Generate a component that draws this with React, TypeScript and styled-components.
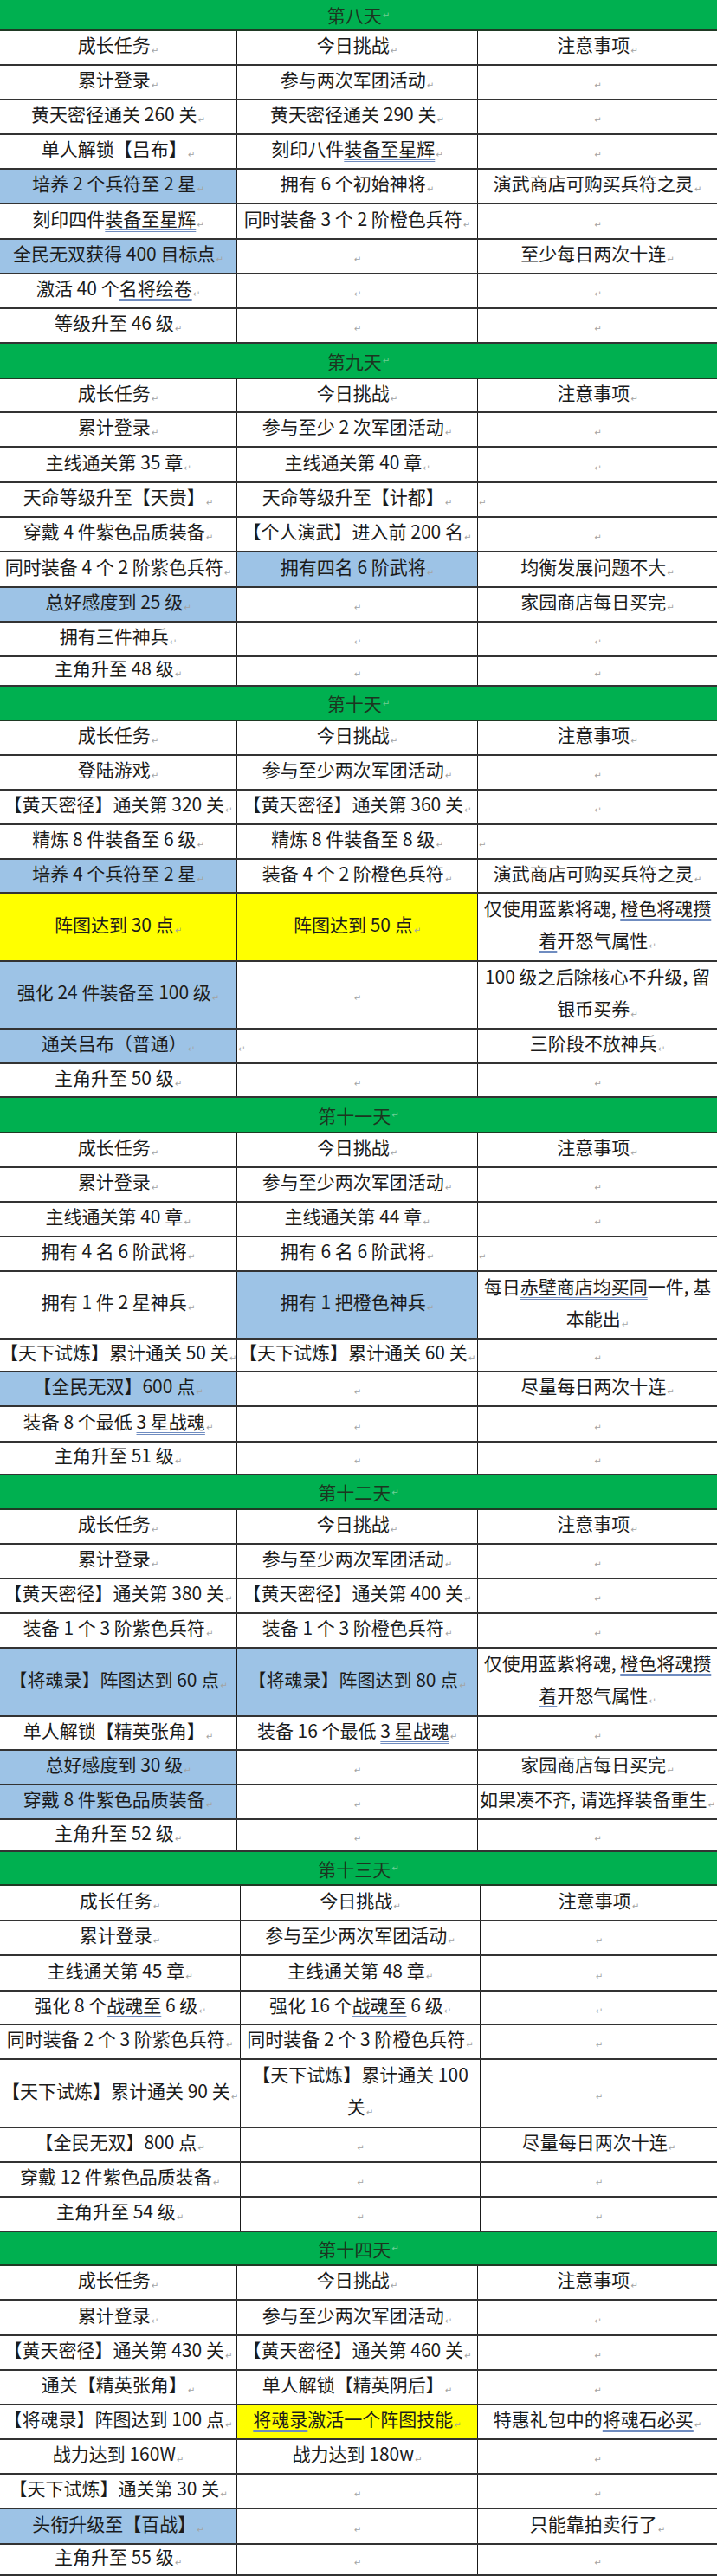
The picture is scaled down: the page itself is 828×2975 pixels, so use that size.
import React from "react";
import styled, { createGlobalStyle } from "styled-components";

const GlobalStyle = createGlobalStyle`
  html, body {
    margin: 0;
    padding: 0;
    background: #ffffff;
  }
  body {
    font-family: "Noto Sans CJK SC", "Noto Sans", sans-serif;
  }
`;

const Page = styled.div`
  width: 828px;
  display: flex;
  flex-flow: column;
  background: #ffffff;
`;

const DayBar = styled.div<{ $h: number }>`
  height: ${(p) => p.$h}px;
  box-sizing: border-box;
  display: flex;
  align-items: center;
  justify-content: center;
  background: #00b050;
  border-bottom: 2px solid #1f3a24;
  color: #1c3520;
  font-size: 21px;
`;

const Row = styled.div<{ $h: number; $cols: string }>`
  height: ${(p) => p.$h}px;
  box-sizing: border-box;
  display: grid;
  grid-template-columns: ${(p) => p.$cols};
  border-bottom: 2px solid #333333;
`;

const bgs: Record<string, string> = {
  blue: "#9dc3e6",
  yellow: "#ffff00",
  none: "#ffffff",
};

const Cell = styled.div<{ $bg: string; $left: boolean; $first: boolean; $multi: boolean }>`
  display: flex;
  flex-flow: column;
  justify-content: center;
  overflow: hidden;
  background: ${(p) => bgs[p.$bg]};
  border-left: ${(p) => (p.$first ? "none" : "1px solid #1a1a1a")};

  .text {
    white-space: nowrap;
    text-align: ${(p) => (p.$left ? "left" : "center")};
    font-size: 21px;
    line-height: ${(p) => (p.$multi ? "37px" : "28px")};
    color: #1b1b1b;
  }
`;

const Mark = styled.span<{ $light?: boolean }>`
  font-family: "DejaVu Sans", sans-serif;
  font-size: 10px;
  color: ${(p) => (p.$light ? "#6fcf97" : "#a3a3a3")};
  margin-left: 1px;
  vertical-align: -2px;
`;

const Under = styled.span`
  text-decoration: underline double #6f8cc0;
  text-decoration-thickness: 1px;
  text-underline-offset: 4px;
`;

type RowDef = [number, string, string, string];

type Section = {
  title: string;
  bar: number;
  cols: string;
  rows: RowDef[];
};

const sections: Section[] = [
  {
    title: "第八天",
    bar: 36,
    cols: "273px 278px 1fr",
    rows: [
      [40, "成长任务", "今日挑战", "注意事项"],
      [40, "累计登录", "参与两次军团活动", ""],
      [40, "黄天密径通关 260 关", "黄天密径通关 290 关", ""],
      [40, "单人解锁【吕布】", "刻印八件[装备至星辉]", ""],
      [40, "B:培养 2 个兵符至 2 星", "拥有 6 个初始神将", "演武商店可购买兵符之灵"],
      [41, "刻印四件[装备至星辉]", "同时装备 3 个 2 阶橙色兵符", ""],
      [40, "B:全民无双获得 400 目标点", "", "至少每日两次十连"],
      [40, "激活 40 个[名将绘卷]", "", ""],
      [40, "等级升至 46 级", "", ""],
    ],
  },
  {
    title: "第九天",
    bar: 41,
    cols: "273px 278px 1fr",
    rows: [
      [39, "成长任务", "今日挑战", "注意事项"],
      [40, "累计登录", "参与至少 2 次军团活动", ""],
      [41, "主线通关第 35 章", "主线通关第 40 章", ""],
      [40, "天命等级升至【天贵】", "天命等级升至【计都】", "<"],
      [40, "穿戴 4 件紫色品质装备", "【个人演武】进入前 200 名", ""],
      [41, "同时装备 4 个 2 阶紫色兵符", "B:拥有四名 6 阶武将", "均衡发展问题不大"],
      [40, "B:总好感度到 25 级", "", "家园商店每日买完"],
      [40, "拥有三件神兵", "", ""],
      [34, "主角升至 48 级", "", ""],
    ],
  },
  {
    title: "第十天",
    bar: 40,
    cols: "273px 278px 1fr",
    rows: [
      [40, "成长任务", "今日挑战", "注意事项"],
      [40, "登陆游戏", "参与至少两次军团活动", ""],
      [40, "【黄天密径】通关第 320 关", "【黄天密径】通关第 360 关", ""],
      [40, "精炼 8 件装备至 6 级", "精炼 8 件装备至 8 级", "<"],
      [39, "B:培养 4 个兵符至 2 星", "装备 4 个 2 阶橙色兵符", "演武商店可购买兵符之灵"],
      [79, "Y:阵图达到 30 点", "Y:阵图达到 50 点", "仅使用蓝紫将魂, [橙色将魂攒]\n[着]开怒气属性"],
      [78, "B:强化 24 件装备至 100 级", "", "100 级之后除核心不升级, 留\n银币买券"],
      [40, "B:通关吕布（普通）", "<", "三阶段不放神兵"],
      [39, "主角升至 50 级", "", ""],
    ],
  },
  {
    title: "第十一天",
    bar: 41,
    cols: "273px 278px 1fr",
    rows: [
      [40, "成长任务", "今日挑战", "注意事项"],
      [40, "累计登录", "参与至少两次军团活动", ""],
      [40, "主线通关第 40 章", "主线通关第 44 章", ""],
      [40, "拥有 4 名 6 阶武将", "拥有 6 名 6 阶武将", "<"],
      [78, "拥有 1 件 2 星神兵", "B:拥有 1 把橙色神兵", "每日[赤壁商店均买同]一件, 基\n本能出"],
      [38, "【天下试炼】累计通关 50 关", "【天下试炼】累计通关 60 关", ""],
      [40, "B:【全民无双】600 点", "", "尽量每日两次十连"],
      [41, "装备 8 个最低 [3 星战魂]", "", ""],
      [38, "主角升至 51 级", "", ""],
    ],
  },
  {
    title: "第十二天",
    bar: 40,
    cols: "273px 278px 1fr",
    rows: [
      [40, "成长任务", "今日挑战", "注意事项"],
      [40, "累计登录", "参与至少两次军团活动", ""],
      [40, "【黄天密径】通关第 380 关", "【黄天密径】通关第 400 关", ""],
      [40, "装备 1 个 3 阶紫色兵符", "装备 1 个 3 阶橙色兵符", ""],
      [79, "B:【将魂录】阵图达到 60 点", "B:【将魂录】阵图达到 80 点", "仅使用蓝紫将魂, [橙色将魂攒]\n[着]开怒气属性"],
      [39, "单人解锁【精英张角】", "装备 16 个最低 [3 星战魂]", ""],
      [40, "B:总好感度到 30 级", "", "家园商店每日买完"],
      [40, "B:穿戴 8 件紫色品质装备", "", "如果凑不齐, 请选择装备重生"],
      [37, "主角升至 52 级", "", ""],
    ],
  },
  {
    title: "第十三天",
    bar: 39,
    cols: "277px 277px 1fr",
    rows: [
      [41, "成长任务", "今日挑战", "注意事项"],
      [40, "累计登录", "参与至少两次军团活动", ""],
      [41, "主线通关第 45 章", "主线通关第 48 章", ""],
      [39, "强化 8 个[战魂至] 6 级", "强化 16 个[战魂至] 6 级", ""],
      [40, "同时装备 2 个 3 阶紫色兵符", "同时装备 2 个 3 阶橙色兵符", ""],
      [79, "【天下试炼】累计通关 90 关", "【天下试炼】累计通关 100\n关", ""],
      [40, "【全民无双】800 点", "", "尽量每日两次十连"],
      [40, "穿戴 12 件紫色品质装备", "", ""],
      [40, "主角升至 54 级", "", ""],
    ],
  },
  {
    title: "第十四天",
    bar: 39,
    cols: "273px 278px 1fr",
    rows: [
      [40, "成长任务", "今日挑战", "注意事项"],
      [41, "累计登录", "参与至少两次军团活动", ""],
      [40, "【黄天密径】通关第 430 关", "【黄天密径】通关第 460 关", ""],
      [40, "通关【精英张角】", "单人解锁【精英阴后】", ""],
      [40, "【将魂录】阵图达到 100 点", "Y:[将魂录]激活一个阵图技能", "特惠礼包中的[将魂石必买]"],
      [40, "战力达到 160W", "战力达到 180w", ""],
      [40, "【天下试炼】通关第 30 关", "", ""],
      [41, "B:头衔升级至【百战】", "", "只能靠拍卖行了"],
      [36, "主角升至 55 级", "", ""],
    ],
  },
];

// "[...]" marks the spell-check double underline, "\n" a line break
const renderLine = (line: string, key: number) =>
  line.split(/(\[[^\]]+\])/).map((part, i) =>
    part.startsWith("[") ? (
      <Under key={`${key}-${i}`}>{part.slice(1, -1)}</Under>
    ) : (
      <React.Fragment key={`${key}-${i}`}>{part}</React.Fragment>
    )
  );

const TableCell = ({ raw, first }: { raw: string; first: boolean }) => {
  let text = raw;
  let bg = "none";
  if (text.startsWith("B:")) {
    bg = "blue";
    text = text.slice(2);
  } else if (text.startsWith("Y:")) {
    bg = "yellow";
    text = text.slice(2);
  }
  const left = text === "<";
  if (left) text = "";
  const lines = text.split("\n");

  return (
    <Cell $bg={bg} $left={left} $first={first} $multi={lines.length > 1}>
      <div className="text">
        {lines.map((line, i) => (
          <React.Fragment key={i}>
            {i > 0 && <br />}
            {renderLine(line, i)}
          </React.Fragment>
        ))}
        <Mark>↵</Mark>
      </div>
    </Cell>
  );
};

export default function App() {
  return (
    <Page>
      <GlobalStyle />
      {sections.map((s) => (
        <React.Fragment key={s.title}>
          <DayBar $h={s.bar}>
            {s.title}
            <Mark $light>↵</Mark>
          </DayBar>
          {s.rows.map(([h, a, b, c], i) => (
            <Row key={i} $h={h} $cols={s.cols}>
              <TableCell raw={a} first />
              <TableCell raw={b} first={false} />
              <TableCell raw={c} first={false} />
            </Row>
          ))}
        </React.Fragment>
      ))}
    </Page>
  );
}
